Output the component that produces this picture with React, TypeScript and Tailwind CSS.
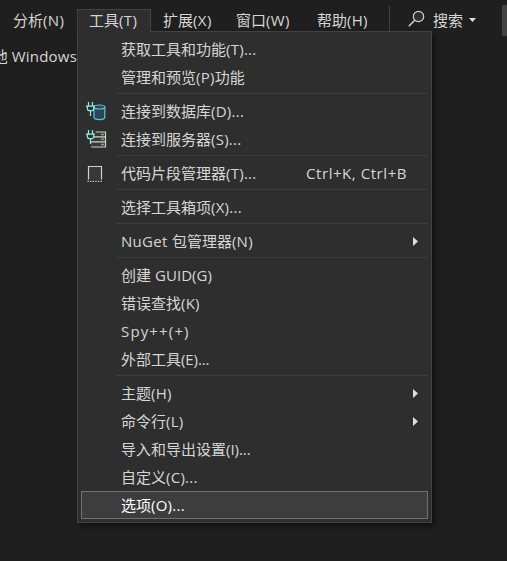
import React from "react";

type Entry = { label: string; latin?: string; icon?: "db" | "server" | "snippet"; keys?: string; sub?: boolean; selected?: boolean };

const groups: Entry[][] = [
  [{ label: "获取工具和功能(T)..." }, { label: "管理和预览(P)功能" }],
  [
    { label: "连接到数据库(D)...", icon: "db" },
    { label: "连接到服务器(S)...", icon: "server" },
  ],
  [{ label: "代码片段管理器(T)...", icon: "snippet", keys: "Ctrl+K, Ctrl+B" }],
  [{ label: "选择工具箱项(X)..." }],
  [{ label: "NuGet 包管理器(N)", latin: "tracking-[0.3px]", sub: true }],
  [
    { label: "创建 GUID(G)", latin: "tracking-[0.05px]" },
    { label: "错误查找(K)" },
    { label: "Spy++(+)", latin: "tracking-[1.15px]" },
    { label: "外部工具(E)...", latin: "tracking-[-0.1px]" },
  ],
  [
    { label: "主题(H)", sub: true },
    { label: "命令行(L)", sub: true },
    { label: "导入和导出设置(I)...", latin: "tracking-[-0.05px]" },
    { label: "自定义(C)..." },
    { label: "选项(O)...", selected: true },
  ],
];

function Plug() {
  return (
    <g stroke="#8ff0dc" fill="none" strokeWidth="1.2">
      <path d="M2.5 1v4M6.5 1v4M0 5.1h9M1.3 5v2.5q0 2.3 3.2 2.3t3.2-2.3V5M4.5 10v5" />
    </g>
  );
}

function Icon({ kind }: { kind: Entry["icon"] }) {
  if (kind === "snippet")
    return (
      <svg className="ml-[4px]" width="22" height="20" viewBox="0 0 22 20" fill="none">
        <path d="M2.5 16.5V3.5h13v13" fill="#383838" stroke="#d0d0d0" strokeWidth="1.2" />
        <path d="M1.5 18.3h15" stroke="#d0d0d0" strokeWidth="1.2" strokeDasharray="1.3 1.3" />
      </svg>
    );
  return (
    <svg className="ml-[4px]" width="22" height="20" viewBox="0 0 22 20" fill="none">
      {kind === "db" ? (
        <g stroke="#62bfe2" strokeWidth="1.2">
          <path d="M8 6v10.3c0 3 10.8 3 10.8 0V6" fill="#2c4651" />
          <ellipse cx="13.4" cy="6" rx="5.4" ry="2" fill="#2c4651" />
        </g>
      ) : (
        <g>
          <path d="M9.5 3h10v4.8H9.5M8 7.8h11.5v5H7M5 12.8h14.5V18H5" fill="#383838" stroke="#d0d0d0" strokeWidth="1.2" />
          <path d="M15 5.5h3M15 10.3h3M15 15.4h3" stroke="#69bd65" strokeWidth="1.5" />
        </g>
      )}
      <Plug />
    </svg>
  );
}

function Label({ text, latin = "tracking-[0.25px]" }: { text: string; latin?: string }) {
  return (
    <>
      {text.split(/([\x20-\x7e]+)/).map((run, i) => (i % 2 ? <span key={i} className={latin}>{run}</span> : run))}
    </>
  );
}

function Row({ e }: { e: Entry }) {
  return (
    <div className={`flex h-7 items-center border ${e.selected ? "border-[#707070] bg-[#3d3d3d] text-white" : "border-transparent"}`}>
      <div className="flex w-[39px] shrink-0 items-center">{e.icon && <Icon kind={e.icon} />}</div>
      <div className="flex-1"><Label text={e.label} latin={e.latin} /></div>
      {e.keys && <div className="mr-[20px]"><Label text={e.keys} latin="tracking-[0.55px]" /></div>}
      {e.sub && (
        <svg className="mr-[9px]" width="5" height="9" viewBox="0 0 5 9"><path d="M0 0L5 4.5L0 9z" fill="#dedede" /></svg>
      )}
    </div>
  );
}

export default function App() {
  return (
    <div className="relative h-[561px] w-[507px] overflow-hidden bg-[#1f1f1f] font-['Open_Sans','Noto_Sans_CJK_SC',sans-serif] text-[15px] leading-[22px] font-normal whitespace-nowrap text-[#d6d6d6]">
      <header className="flex h-[31px] pt-[9px]">
        <div className="w-[77px] pl-[13px]"><Label text="分析(N)" latin="tracking-[0.4px]" /></div>
        <div className="relative z-10 h-[23px] w-[74px] border border-b-0 border-[#424242] bg-[#2e2e2e] pl-[11px] leading-[20px]"><Label text="工具(T)" latin="tracking-[0.4px]" /></div>
        <div className="w-[85px] pl-[12px]"><Label text="扩展(X)" latin="tracking-[0.4px]" /></div>
        <div className="w-[81px]"><Label text="窗口(W)" latin="tracking-[0.4px]" /></div>
        <div className="w-[72px]"><Label text="帮助(H)" /></div>
        <div className="-mt-[3px] h-[25px] w-px bg-[#424242]" />
        <svg className="ml-[18px] mt-[1px]" width="17" height="18" viewBox="0 0 17 18" fill="none" stroke="#d0d0d0" strokeWidth="1.2">
          <circle cx="10.5" cy="6.5" r="5.2" fill="#303030" />
          <path d="M6.8 10.2L0.8 16.2" strokeWidth="1.5" />
        </svg>
        <div className="ml-[8px]">搜索</div>
        <svg className="ml-[6px] mt-[9px]" width="7" height="4" viewBox="0 0 7 4"><path d="M0 0h7L3.5 4z" fill="#dedede" /></svg>
      </header>
      <div className="absolute top-[5px] right-0 h-[31px] w-[5px] bg-[#424242]" />
      <main className="flex">
        <div className="flex h-[50px] w-[77px] shrink-0 justify-end overflow-hidden pt-[14px]">
          <div className="shrink-0"><Label text="他 Windows" latin="tracking-[0.2px]" /></div>
        </div>
        <div className="w-[355px] border border-[#424242] bg-[#2e2e2e] p-[3px] shadow-[3px_3px_5px_rgba(0,0,0,0.5)]">
          {groups.map((g, i) => (
            <div key={i}>
              {i > 0 && <div className="flex h-[6px] pt-[2px] pl-[35px]"><div className="h-px flex-1 bg-[#3d3d3d]" /></div>}
              {g.map((e) => <Row key={e.label} e={e} />)}
            </div>
          ))}
        </div>
      </main>
    </div>
  );
}
